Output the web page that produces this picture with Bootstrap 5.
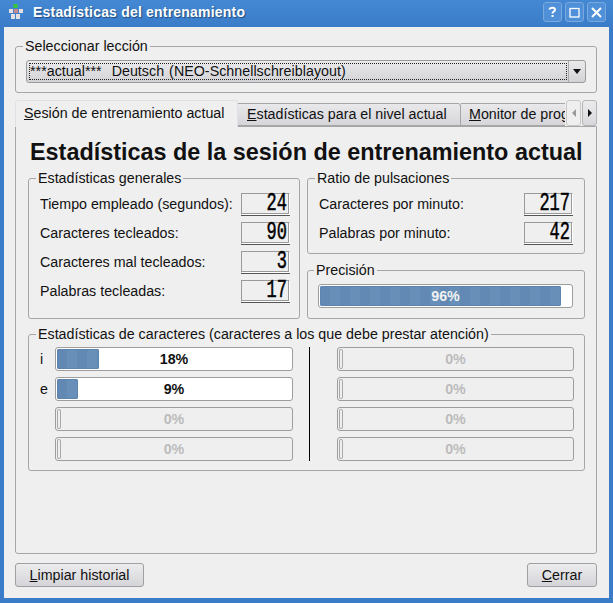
<!DOCTYPE html>
<html lang="es">
<head>
    <meta charset="UTF-8">
    <meta name="viewport" content="width=device-width, initial-scale=1.0">
    <title>Estadísticas del entrenamiento</title>
    <link href="https://cdn.jsdelivr.net/npm/bootstrap@5.3.0/dist/css/bootstrap.min.css" rel="stylesheet">
    <style>
        html, body { height: 100%; }
        body { margin: 0; background: #3a7cc7; font-family: "Liberation Sans", Arial, sans-serif; font-size: 14.25px; line-height: 16px; color: #111; overflow: hidden; }
        .app-window { width: 613px; height: 603px; }
        .title-bar { height: 27px; padding: 0 7px 3px 9px; background: linear-gradient(#4488d4, #3a7cc7); color: #fff; }
        .title-text { margin-left: 10px; font-weight: 700; font-size: 14px; letter-spacing: .2px; text-shadow: 1px 1px 1px #1d4a80; }
        .win-btns { column-gap: 3px; }
        .win-btn { width: 19px; height: 20px; border: 1px solid #79a9dd; border-radius: 3px; background: #4f90d8; color: #fff; }
        .win-body { flex: 1; min-height: 0; margin: 0 4px 5px; padding: 11px 12px 11px 11px; background: #efefef; }
        .group-box { min-width: 0; margin: 0; padding: 0 10px 9px 11px; border: 1px solid #a6a6a6; border-radius: 3px; }
        .group-box legend { float: none; width: auto; margin: 0 0 0 -4px; padding: 0 2px; font-size: 14.25px; line-height: 16px; }
        .lesson-box { padding: 6px 10px 9px 10px; }
        .lesson-box legend { margin-left: -3px; }
        .combo { height: 23px; border: 1px solid #9b9b9b; border-radius: 3px; background: linear-gradient(#eaeaec, #d3d3d7); }
        .combo-text { flex: 1; margin: 2px 1px 2px 2px; border: 1px dotted #222; line-height: 15px; white-space: pre; word-spacing: 1px; letter-spacing: .03px; }
        .combo-arrow { width: 17px; border-left: 1px solid #a9a9a9; }
        .tri-down { border-left: 4px solid transparent; border-right: 4px solid transparent; border-top: 5px solid #111; }
        .tabs-row { height: 26px; margin-top: 7px; }
        .tabs-row .nav-tabs { flex: 1; flex-wrap: nowrap; overflow: hidden; border: 0; height: 27px; }
        .tabs-row .nav-link { height: 23px; margin: 3px 0 0; padding: 2px 6px 0 8px; border: 1px solid #a6a6a6; border-left-width: 0; border-radius: 0 3px 0 0; background: linear-gradient(#e9e9eb, #d6d6da); color: #111; white-space: nowrap; }
        .tabs-row .nav-link.active { height: 27px; width: 223px; margin-top: 0; padding: 4px 0 0 8px; border-width: 1px 1px 0 1px; border-radius: 3px 3px 0 0; background: #efefef; color: #111; position: relative; z-index: 1; }
        .tabs-row .tab-two { width: 223px; padding-left: 9px; }
        .tabs-row .tab-three { min-width: 120px; }
        .tab-scroll { width: 15px; height: 26px; border: 1px solid #b5b5b5; border-radius: 3px; background: linear-gradient(#ececee, #d8d8dc); margin-left: 1px; }
        .tab-scroll.off { background: #efefef; border-color: #c8c8c8; }
        .tri-left { border-top: 4px solid transparent; border-bottom: 4px solid transparent; border-right: 4px solid #999; }
        .tri-right { border-top: 4px solid transparent; border-bottom: 4px solid transparent; border-left: 4px solid #111; }
        .tab-pane-box { flex: 1; min-height: 0; padding: 0 11px 0 12px; border: 1px solid #a6a6a6; border-radius: 0 0 3px 3px; }
        .stats-title { margin: 12px 0 5px 2px; font-size: 23.4px; line-height: 26px; font-weight: 700; color: #111; white-space: nowrap; }
        .col-general { width: 272px; padding-right: 9px; }
        .col-right { width: 278px; row-gap: 8px; }
        .ratio-box { padding-right: 11px; }
        .gen-rows { padding-top: 7px; row-gap: 7px; }
        .stat-row { height: 22px; }
        .lcd-num { width: 49px; height: 22px; padding-right: 2px; border: 1px solid; border-color: #9a9a9a #fff #fff #9a9a9a; box-shadow: inset -1px -1px 0 #9a9a9a, 0 1px 0 #555; background: #efefef; }
        .lcd-val { display: block; font-family: "Liberation Mono", monospace; font-size: 25px; line-height: 20px; font-weight: 400; -webkit-text-stroke: .5px #000; color: #000; transform: scaleX(.68); transform-origin: right center; white-space: nowrap; }
        .prec-box { padding: 6px 11px 10px 10px; }
        .chars-box { margin-top: 7px; padding: 5px 10px 9px 11px; }
        .bar-stack { row-gap: 6px; }
        .bars-left { width: 253px; }
        .bars-right { width: 237px; margin-left: 27px; }
        .bars-sep { width: 1px; margin-left: 16px; background: #000; }
        .char-key { width: 15px; }
        .qt-bar { height: 24px; border: 1px solid #9d9d9d; border-radius: 3px; background: #fff; position: relative; padding: 1px; }
        .qt-bar .progress-bar { height: 100%; border-radius: 2px; background: repeating-linear-gradient(90deg, #6189b4 0 10px, #688fb8 10px 20px); box-shadow: inset 0 0 0 1px #5c84ae; }
        .qt-bar.empty { background: #efefef; }
        .qt-bar.empty .progress-bar { width: 4px; background: #efefef; box-shadow: inset 0 0 0 1px #a8a8a8; }
        .bar-label { position: absolute; inset: 0; font-weight: 700; font-size: 14.25px; line-height: 22px; text-align: center; color: #111; }
        .qt-bar.empty .bar-label { color: #bcbcbc; }
        .bar-label.on-fill { color: #f2f2f2; }
        .qt-btn { height: 24px; padding: 0; border: 1px solid #a0a0a0; border-radius: 3px; background: linear-gradient(#ececee, #d5d5d9); color: #111; font-size: 14.25px; line-height: 20px; }
        .foot-row { margin-top: 9px; }
        .btn-clear { width: 129px; }
        .btn-close-win { width: 70px; }
    </style>
</head>
<body>
<div class="app-window d-flex flex-column">
    <div class="title-bar d-flex align-items-center">
        <svg width="14" height="17" viewBox="0 0 14 17">
            <rect x="4.5" y="0" width="4" height="4" fill="#36c83a"/>
            <rect x="0" y="5" width="4" height="4" fill="#e6dfe0"/>
            <rect x="5" y="5" width="4" height="4" fill="#c9888a"/>
            <rect x="10" y="5" width="4" height="4" fill="#e6dfe0"/>
            <rect x="2" y="10" width="4" height="5" fill="#e6dfe0"/>
            <rect x="7" y="10" width="4" height="5" fill="#e6dfe0"/>
        </svg>
        <span class="title-text">Estadísticas del entrenamiento</span>
        <div class="win-btns ms-auto d-flex">
            <div class="win-btn d-flex align-items-center justify-content-center"><svg width="11" height="12" viewBox="0 0 11 12"><path d="M2.5 3.5C3 1 8 1 8 3.7C8 5.6 5.5 5.5 5.5 7.5" fill="none" stroke="#fff" stroke-width="2"/><rect x="4.5" y="9" width="2" height="2" fill="#fff"/></svg></div>
            <div class="win-btn d-flex align-items-center justify-content-center"><svg width="11" height="11" viewBox="0 0 11 11"><rect x="1" y="1.5" width="9" height="8.5" fill="none" stroke="#fff" stroke-width="1.3"/></svg></div>
            <div class="win-btn d-flex align-items-center justify-content-center"><svg width="11" height="11" viewBox="0 0 11 11"><path d="M1 1L10 10M10 1L1 10" stroke="#fff" stroke-width="2"/></svg></div>
        </div>
    </div>

    <div class="win-body d-flex flex-column">
        <fieldset class="group-box lesson-box">
            <legend>Seleccionar lección</legend>
            <div class="combo d-flex">
                <div class="combo-text">***actual***  Deutsch (NEO-Schnellschreiblayout)</div>
                <div class="combo-arrow d-flex align-items-center justify-content-center"><span class="tri-down"></span></div>
            </div>
        </fieldset>

        <div class="tabs-row d-flex">
            <ul class="nav nav-tabs">
                <li class="nav-item"><a class="nav-link active" href="#"><u>S</u>esión de entrenamiento actual</a></li>
                <li class="nav-item"><a class="nav-link tab-two" href="#"><u>E</u>stadísticas para el nivel actual</a></li>
                <li class="nav-item"><a class="nav-link tab-three" href="#"><u>M</u>onitor de progreso</a></li>
            </ul>
            <div class="tab-scroll off d-flex align-items-center justify-content-center"><span class="tri-left"></span></div>
            <div class="tab-scroll d-flex align-items-center justify-content-center"><span class="tri-right"></span></div>
        </div>

        <div class="tab-pane-box">
            <h1 class="stats-title">Estadísticas de la sesión de entrenamiento actual</h1>
            <div class="d-flex justify-content-between">
                <fieldset class="group-box col-general">
                    <legend>Estadísticas generales</legend>
                    <div class="gen-rows d-flex flex-column">
                        <div class="stat-row d-flex justify-content-between align-items-center"><span>Tiempo empleado (segundos):</span><div class="lcd-num text-end"><span class="lcd-val">24</span></div></div>
                        <div class="stat-row d-flex justify-content-between align-items-center"><span>Caracteres tecleados:</span><div class="lcd-num text-end"><span class="lcd-val">90</span></div></div>
                        <div class="stat-row d-flex justify-content-between align-items-center"><span>Caracteres mal tecleados:</span><div class="lcd-num text-end"><span class="lcd-val">3</span></div></div>
                        <div class="stat-row d-flex justify-content-between align-items-center"><span>Palabras tecleadas:</span><div class="lcd-num text-end"><span class="lcd-val">17</span></div></div>
                    </div>
                </fieldset>
                <div class="col-right d-flex flex-column">
                    <fieldset class="group-box ratio-box">
                        <legend>Ratio de pulsaciones</legend>
                        <div class="gen-rows d-flex flex-column">
                            <div class="stat-row d-flex justify-content-between align-items-center"><span>Caracteres por minuto:</span><div class="lcd-num text-end"><span class="lcd-val">217</span></div></div>
                            <div class="stat-row d-flex justify-content-between align-items-center"><span>Palabras por minuto:</span><div class="lcd-num text-end"><span class="lcd-val">42</span></div></div>
                        </div>
                    </fieldset>
                    <fieldset class="group-box prec-box">
                        <legend>Precisión</legend>
                        <div class="progress qt-bar"><div class="progress-bar" style="width: 96%"></div><div class="bar-label on-fill">96%</div></div>
                    </fieldset>
                </div>
            </div>

            <fieldset class="group-box chars-box">
                <legend>Estadísticas de caracteres (caracteres a los que debe prestar atención)</legend>
                <div class="d-flex">
                    <div class="bars-left bar-stack d-flex flex-column">
                        <div class="d-flex align-items-center"><span class="char-key">i</span><div class="progress qt-bar flex-grow-1"><div class="progress-bar" style="width: 18%"></div><div class="bar-label">18%</div></div></div>
                        <div class="d-flex align-items-center"><span class="char-key">e</span><div class="progress qt-bar flex-grow-1"><div class="progress-bar" style="width: 9%"></div><div class="bar-label">9%</div></div></div>
                        <div class="d-flex align-items-center"><span class="char-key"></span><div class="progress qt-bar empty flex-grow-1"><div class="progress-bar"></div><div class="bar-label">0%</div></div></div>
                        <div class="d-flex align-items-center"><span class="char-key"></span><div class="progress qt-bar empty flex-grow-1"><div class="progress-bar"></div><div class="bar-label">0%</div></div></div>
                    </div>
                    <div class="bars-sep"></div>
                    <div class="bars-right bar-stack d-flex flex-column">
                        <div class="progress qt-bar empty"><div class="progress-bar"></div><div class="bar-label">0%</div></div>
                        <div class="progress qt-bar empty"><div class="progress-bar"></div><div class="bar-label">0%</div></div>
                        <div class="progress qt-bar empty"><div class="progress-bar"></div><div class="bar-label">0%</div></div>
                        <div class="progress qt-bar empty"><div class="progress-bar"></div><div class="bar-label">0%</div></div>
                    </div>
                </div>
            </fieldset>
        </div>

        <div class="foot-row d-flex justify-content-between">
            <button class="btn qt-btn btn-clear"><u>L</u>impiar historial</button>
            <button class="btn qt-btn btn-close-win"><u>C</u>errar</button>
        </div>
    </div>
</div>
<script src="https://cdn.jsdelivr.net/npm/bootstrap@5.3.0/dist/js/bootstrap.bundle.min.js"></script>
</body>
</html>
